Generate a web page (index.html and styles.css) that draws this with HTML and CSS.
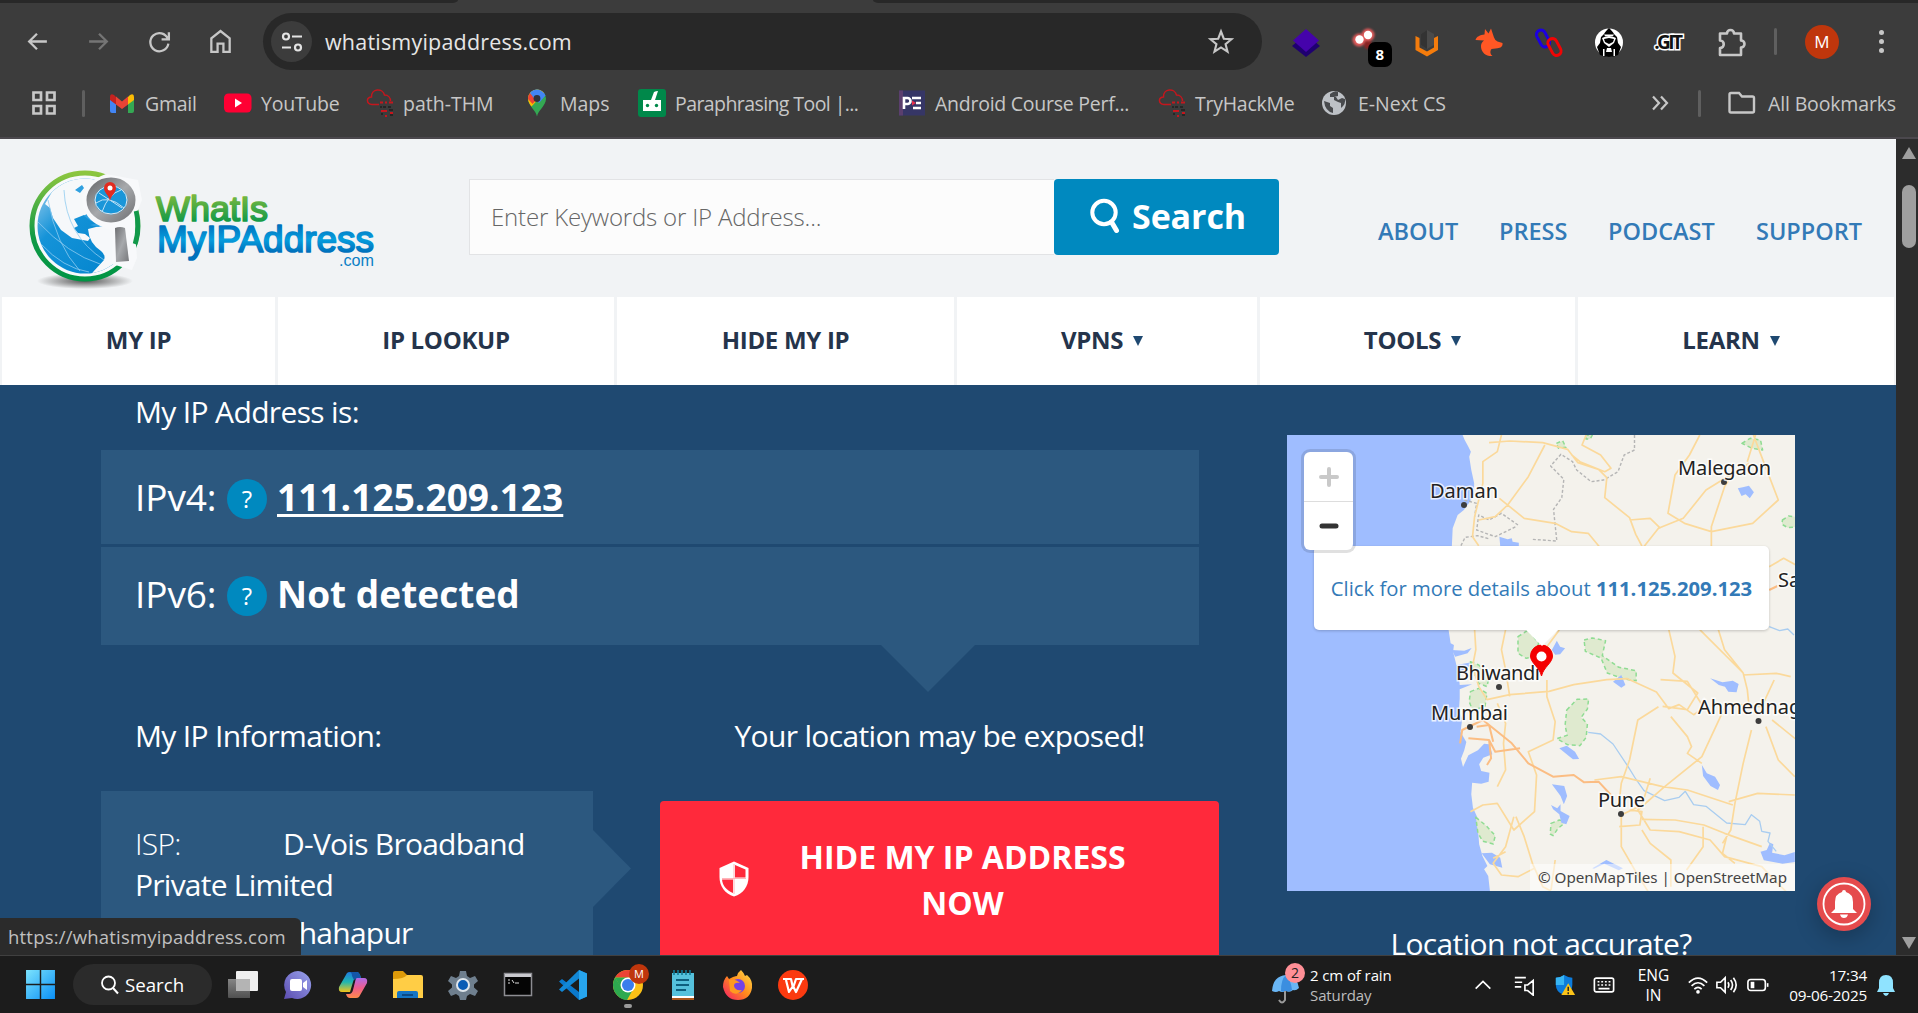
FILE: index.html
```html
<!DOCTYPE html>
<html lang="en">
<head>
<meta charset="utf-8">
<title>What Is My IP Address</title>
<link rel="stylesheet" href="styles.css">
</head>
<body>
<svg class="defs" width="0" height="0" aria-hidden="true">
  <symbol id="thm" viewBox="0 0 28 28">
    <path d="M13 15.500H6C0 15 0 8 5.500 8C5-1 17-1 18.500 6c4 0 6 3 6 6" fill="none" stroke="#c5161d" stroke-width="1.500"/>
    <path d="M14 13.500h3M19 13.500h2M23 13.500h4M15 22h6M24 24h3M19 27h2" stroke="#c5161d" stroke-width="2"/>
    <path d="M14 18h2M17 18h3M22 18h3M23 21h4M15 25h2M24 26h3" stroke="#262626" stroke-width="2"/>
  </symbol>
</svg>

<div class="tabstrip"><i class="tab-left"></i><i class="tab-right"></i></div>
<header class="toolbar">
  <svg class="nav-ic" viewBox="0 0 24 24"><path d="M21 12H4M11.500 4.500L4 12l7.500 7.500" class="ln"/></svg>
  <svg class="nav-ic dim" viewBox="0 0 24 24"><path d="M3 12h17M12.500 4.500L20 12l-7.500 7.500" class="ln"/></svg>
  <svg class="nav-ic" viewBox="0 0 24 24"><path d="M20 9.500A8.700 8.700 0 1 0 20.500 14M21 3v7h-7" class="ln"/></svg>
  <svg class="nav-ic" viewBox="0 0 24 24"><path d="M3.200 22V9L12 2l8.800 7v13h-6v-8H9.200v8z" class="ln"/></svg>
  <div class="omnibox">
    <span class="site"><svg width="22" height="22" viewBox="0 0 22 22"><g fill="none" stroke="#e3e3e3" stroke-width="2.200"><circle cx="5" cy="5.500" r="3"/><path d="M11 5.500h10M1 16.500h9"/><circle cx="17" cy="16.500" r="3"/></g></svg></span>
    <span class="url">whatismyipaddress.com</span>
    <svg class="star" width="28" height="28" viewBox="0 0 24 24"><path d="M12 3l2.400 6.200 6.600.4-5.100 4.200L17.600 20.300 12 16.700l-5.600 3.600 1.700-6.500L3 9.600l6.600-.4z" fill="none" stroke="#c7c7c7" stroke-width="1.800"/></svg>
  </div>
  <div class="exts">
    <svg viewBox="0 0 32 32"><path d="M16 8L30 20 16 31 2 20z" fill="#1f0070"/><path d="M16 3l13 11.500L16 26 3 14.500z" fill="#4503ab"/></svg>
    <span class="ext-badge"><svg viewBox="0 0 32 32"><g class="glow"><circle cx="8" cy="14" r="6.500" fill="#e05a5a"/><circle cx="17" cy="9" r="6.500" fill="#e05a5a"/><circle cx="17" cy="19" r="4" fill="#8a2222"/></g><circle cx="8.500" cy="13.500" r="4.200" fill="#fff"/><circle cx="17" cy="9" r="4.200" fill="#fff"/></svg><b>8</b></span>
    <svg viewBox="0 0 32 32"><path d="M16 4l7 4v11l-7 4-6-4V8z" fill="#4a4a4a"/><path d="M16 4v19l-6-4V8z" fill="#333"/><path d="M4.500 10l4 2v9.500l7.500 4 7-4V12l4-2v14l-11 6.500L4.500 24z" fill="#f47c0c"/></svg>
    <svg viewBox="0 0 32 32"><path d="M12.500 8.500L13 3l3.500 4.500L19 2.500l3 9q1 3 3.500 4l5 1.500c.5 3.500-2 5-5 5.200l-6 .8c-2 2.500-1 5.500 1 7-6 .5-11-3-11.500-9-.3-3 1-5 3-6.500l-8.500-.5c1-3.500 4.500-5 9-5.500z" fill="#ff5724"/></svg>
    <svg viewBox="0 0 32 32"><g fill="none" stroke-width="3"><rect x="5.500" y="3.500" width="9" height="18" rx="4.500" transform="rotate(-28 10 12.500)" stroke="#1c00e0"/><rect x="17" y="12" width="9" height="18" rx="4.500" transform="rotate(-28 21.500 21)" stroke="#f00505"/></g></svg>
    <svg viewBox="0 0 32 32"><ellipse cx="16" cy="16.500" rx="14" ry="14" fill="#fff"/><path d="M16 2c2 2 4 4 5 6l3 3 1 6 3 4-3 8q-9 4-18 0l-3-8 3-4 1-6 3-3c1-2 3-4 5-6z" fill="#000"/><path d="M11 8.500h10l-1 1.500h-8zM9 12q7-4 14 0l-2 5-5 4-5-4zM14 22h4l1 4h-6zM10 23h1.500v7H10zM20.500 23H22v7h-1.500z" fill="#fff"/><path d="M11 13l5-1 5 1-1 3-4 2-4-2z" fill="#000"/></svg>
    <span class="git">.GIT</span>
    <svg viewBox="0 0 32 32"><path d="M5 7.500h7a3.500 3.500 0 0 1 7 0h7v7a3.500 3.500 0 0 1 0 7V29H5v-7c5 0 5-7.500 0-7.500z" fill="none" stroke="#c7c7c7" stroke-width="2.600" stroke-linejoin="round"/></svg>
  </div>
  <i class="vsep"></i>
  <span class="avatar">M</span>
  <span class="dots"><i></i><i></i><i></i></span>
</header>

<nav class="bookmarks">
  <svg class="apps" viewBox="0 0 24 24"><path d="M1.500 1.500h7.500v7.500H1.500zM15 1.500h7.500v7.500H15zM1.500 15h7.500v7.500H1.500zM15 15h7.500v7.500H15z" fill="none" stroke="#c7c7c7" stroke-width="2.700"/></svg>
  <i class="vsep"></i>
  <a class="snug"><svg viewBox="0 0 28 28"><path d="M2 8v14q0 2 2 2h4V12z" fill="#4285f4"/><path d="M26 8v14q0 2-2 2h-4V12z" fill="#34a853"/><path d="M2 8v3l6 4.500V8L6 6Q2 4 2 8z" fill="#c5221f"/><path d="M26 8v3l-6 4.500V8l2-2q4-2 4 2z" fill="#fbbc04"/><path d="M8 7.500l6 5 6-5v8l-6 4.500-6-4.500z" fill="#ea4335"/></svg>Gmail</a>
  <a class="snug"><svg viewBox="0 0 28 28"><rect x="0" y="4.500" width="27.500" height="19" rx="4.500" fill="#ff0033"/><path d="M11 9.500v9l7-4.500z" fill="#fff"/></svg>YouTube</a>
  <a><svg><use href="#thm"/></svg>path-THM</a>
  <a><svg viewBox="0 0 28 28"><path d="M14 27.500C13 21 5 17 5 9.500A9 9 0 0 1 14 .5a9 9 0 0 1 9 9C23 17 15 21 14 27.500z" fill="#34a853"/><path d="M5 9.500C5 13 7 15.500 8.500 17.500L21 4Q18.500.5 14 .5a9 9 0 0 0-9 9z" fill="#fbbc04"/><path d="M5 10A9 9 0 0 1 7 4l7 6-4.500 5z" fill="#ea4335"/><path d="M7 4Q9.500.5 14 .5T21.500 5L14 13z" fill="#4285f4"/><path d="M21 4l-7 8 2 2 6.500-7.500z" fill="#4285f4"/><circle cx="14" cy="9.500" r="3.400" fill="#2f333d"/></svg>Maps</a>
  <a class="tight"><svg viewBox="0 0 28 28"><rect width="28" height="28" rx="3" fill="#00884a"/><path d="M5 11h8l3-8q2-1 4-1l-3 9h6v11H5z" fill="#fff"/><circle cx="9.500" cy="16.500" r="1.700" fill="#00884a"/><circle cx="18.500" cy="16.500" r="1.700" fill="#00884a"/></svg>Paraphrasing Tool |...</a>
  <a class="snug"><svg viewBox="0 0 28 28"><rect x="1" y="1.500" width="26" height="25" fill="#363666"/><rect x="1" y="1.500" width="4" height="25" fill="#5b3f6e"/><g fill="none" stroke="#fff" stroke-width="2.600"><path d="M6 20V9h3.500a3 3 0 0 1 0 6H6M14 9h9M18 14h5M15 19h8"/></g><path d="M14 11.500l4 2.500-4 2.500z" fill="#e62e4d"/></svg>Android Course Perf...</a>
  <a class="snug"><svg><use href="#thm"/></svg>TryHackMe</a>
  <a><svg viewBox="0 0 28 28"><circle cx="13" cy="14" r="12" fill="#bdc1c6"/><path d="M3 12l6 2v3l3 2v5q-8-2-9-12zM9 5q5-4 8-2v4l-4 1v3l4 2 3 1v5q5-4 4-9l-3-1-4 2-2-3h-6z" fill="#484a4d"/></svg>E-Next CS</a>
  <svg class="more" viewBox="0 0 18 18"><path d="M2 2.500L8 9l-6 6.500M10 2.500L16 9l-6 6.500" fill="none" stroke="#c7c7c7" stroke-width="2.200"/></svg>
  <i class="vsep"></i>
  <a class="all"><svg viewBox="0 0 28 28"><path d="M1.500 22V5.500q0-1.500 1.500-1.500h8l3 3.500h10.500q1.500 0 1.500 1.500V22q0 1.500-1.500 1.500H3q-1.500 0-1.500-1.500z" fill="none" stroke="#c7c7c7" stroke-width="2.400"/></svg>All Bookmarks</a>
</nav>

<div class="viewport">
  <main class="page">
    <div class="masthead">
      <svg class="logo" width="360" height="130" viewBox="22 162 360 130">
        <defs>
          <linearGradient id="ring" x1="0" y1="0" x2="0" y2="1"><stop offset="0" stop-color="#8cc63f"/><stop offset=".6" stop-color="#129a47"/><stop offset="1" stop-color="#009444"/></linearGradient>
          <linearGradient id="sea" x1="0" y1="0" x2="1" y2="1"><stop offset="0" stop-color="#a8d4f0"/><stop offset=".35" stop-color="#1593d8"/><stop offset="1" stop-color="#0082cc"/></linearGradient>
          <linearGradient id="steel" x1="0" y1="0" x2="1" y2="1"><stop offset="0" stop-color="#6d6e71"/><stop offset=".5" stop-color="#a7a9ac"/><stop offset="1" stop-color="#77787b"/></linearGradient>
          <linearGradient id="tg" x1="0" y1="0" x2="0" y2="1"><stop offset=".15" stop-color="#7cb93f"/><stop offset=".8" stop-color="#159a47"/></linearGradient>
          <linearGradient id="tb" x1="0" y1="0" x2="0" y2="1"><stop offset=".15" stop-color="#0071bc"/><stop offset=".5" stop-color="#069ddd"/><stop offset=".8" stop-color="#0071bc"/></linearGradient>
          <radialGradient id="sh"><stop offset="0" stop-color="#555"/><stop offset="1" stop-color="#f1f3f5"/></radialGradient>
          <clipPath id="gl"><circle cx="85" cy="226" r="47.500"/></clipPath>
        </defs>
        <ellipse cx="85" cy="281" rx="48" ry="8" fill="url(#sh)"/>
        <circle cx="85" cy="226" r="53" fill="#f8f9fb" stroke="url(#ring)" stroke-width="5"/>
        <circle cx="85" cy="226" r="47.500" fill="url(#sea)"/>
        <g clip-path="url(#gl)">
          <path d="M52 192q16-16 44-15l10 45-14-3-8-4-10 4 4 7-4 2 4 5 7 1 5 4-2 3-16-3-11-8-8-12-3-10-5-4z" fill="#f6f8fa"/>
          <path d="M88 229l12-3 14 3 19 9-4 28-18 14-22-2 4-6 11-12q2-5-3-9-12-8-13-22z" fill="#f6f8fa"/>
          <path d="M75 190l7-5 2 3-4 5zM84 216l5-4 5 6-3 3zM90 225l12-3 5 3-9 2z" fill="#2fa0e0"/>
          <g fill="none" stroke="#8fcbf0" stroke-width=".8"><path d="M38 222q30 32 62 42M41 244q22 24 48 28M48 200q8 45 32 71M64 190q2 45 40 70"/></g>
        </g>
        <path d="M106 174q-28 10-23 32 4 16 22 22l8 3-1 33 20 6 5-12-3-38 8-20-4-20z" fill="#f8f9fb"/>
        <path d="M115 228q5-2 10 0l4 33-13 1z" fill="url(#steel)"/>
        <path d="M136 211q4 16-1 33" fill="none" stroke="#12994a" stroke-width="4.500"/>
        <ellipse cx="111" cy="200" rx="20.500" ry="18.500" fill="#1a96d9" stroke="url(#steel)" stroke-width="8"/>
        <ellipse cx="111" cy="200" rx="16" ry="14" fill="none" stroke="#e3e9ee"/>
        <path d="M96 203q12-9 28 5M102 212q6-18 19-22M99 193l23 15" fill="none" stroke="#bfe2f6"/>
        <path d="M110 201c-1-6-6-8-6-13a6 6 0 0 1 12 0c0 5-5 7-6 13z" fill="#e22b20"/><circle cx="110" cy="188" r="2.500" fill="#fff"/>
        <g font-family="'Liberation Sans', Arial, sans-serif" stroke-linejoin="round">
          <text x="156" y="221" font-size="35.500" textLength="112" lengthAdjust="spacingAndGlyphs" fill="url(#tg)" stroke="url(#tg)" stroke-width="1.700">WhatIs</text>
          <text x="157" y="252" font-size="36" textLength="217" lengthAdjust="spacingAndGlyphs" fill="url(#tb)" stroke="url(#tb)" stroke-width="1.700">MyIPAddress</text>
          <text x="339" y="265.500" font-size="17" textLength="35" lengthAdjust="spacingAndGlyphs" fill="#0b7fc6">.com</text>
        </g>
      </svg>
      <div class="search">
        <div class="field">Enter Keywords or IP Address...</div>
        <div class="go"><svg width="32" height="36" viewBox="0 0 32 36"><circle cx="15" cy="14.500" r="11.700" fill="none" stroke="#fff" stroke-width="4"/><path d="M22.500 24l5 8.500" stroke="#fff" stroke-width="5" stroke-linecap="round"/></svg><span>Search</span></div>
      </div>
      <div class="links"><a>ABOUT</a><a>PRESS</a><a>PODCAST</a><a>SUPPORT</a></div>
    </div>
    <nav class="menu">
      <a>MY IP</a><a>IP LOOKUP</a><a>HIDE MY IP</a><a class="sub">VPNS<i></i></a><a class="sub">TOOLS<i></i></a><a class="sub">LEARN<i></i></a>
    </nav>
    <div class="hero">
      <section class="info">
        <h2>My IP Address is:</h2>
        <div class="ip"><span class="lab">IPv4:</span><span class="q">?</span><b class="u">111.125.209.123</b></div>
        <div class="ip two"><span class="lab">IPv6:</span><span class="q">?</span><b>Not detected</b></div>
        <i class="down"></i>
        <div class="cols">
          <div class="left">
            <h2>My IP Information:</h2>
            <div class="isp-wrap">
              <div class="isp">
                <p><span class="key">ISP:</span>D-Vois Broadband Private Limited</p>
                <p><span class="key">City:</span>Shahapur</p>
              </div>
              <i class="right-arrow"></i>
            </div>
          </div>
          <div class="rightc">
            <h2>Your location may be exposed!</h2>
            <div class="hide">
              <svg width="30" height="36" viewBox="0 0 30 36"><path d="M15 .5L29.500 7v9c0 9-5 16.500-14.500 19.500C5.500 32.500.5 25 .5 16V7z" fill="#fff"/><path d="M16 4l10.500 4.500V16.500H16zM14 18.500V32C8 29.500 3.500 25 3 18.500z" fill="#ff293b"/><path d="M3 17.500h24M15 3v30" stroke="#ffb4ba" stroke-width="1"/></svg>
              <span>HIDE MY IP ADDRESS<br>NOW</span>
            </div>
          </div>
        </div>
      </section>
      <section class="where">
        <div class="map">
          <svg width="508" height="456" viewBox="0 0 508 456">
            <rect width="508" height="456" fill="#9fbdff"/>
            <g transform="scale(.4132 .33333) translate(-41 -45)">
              <path fill="#f4f2ec" d="M466 45l5 15 8 18 7 17-4 15 5 40 7 40-1 35-12 25-12 20-15 15-12 40-2 52-8 252 5 41 8 5-2 20 8 40 30-7 15-3-20 20-20 15 3 35 30-2-30 15v28l-2 35 8 25-4 40 14 30-5 25-8 25 5 25 13-35 23-15 15-20 12 2 8 30-22 10-10 20 5 20 20 5-2 27-18 6-22-3-2 35 4 40 11 30 8 25-6 20 2 35 8 35 12 30-8 10 10 20 5 55 8 33H1280V45z"/>
              <g fill="#dfeacf" stroke="#8fdc93" stroke-width="1.500" stroke-dasharray="4 3">
                <path d="M693 70l15-8 8 20-18 3zM762 45h18l-5 12h-10zM1142 70l20-15 25 5 5 30-25-5zM1240 300l15-12 18 3v30l-20 2-14-10zM600 650l25-20 25 40-10 40-20 5-20-15zM760 660l20-6 32 8-8 45 40 35 42 10v30l-30-5-40-18-15-45-38-20zM485 725l20 10 25 35-5 30-20-10-10-30zM485 815l20-10 20 15-5 40-30 10-8-25z"/>
                <path d="M718 870l25-32 28-1-3 30-15 25 15 20-3 40-15 25-30-3-26-18 25-10-5-30zM498 1192l25 25 22 30-5 25-25-8-12-25zM680 1210l20-10 17 5-20 20-12 22-7-5z"/>
              </g>
              <g fill="#9fbdff">
                <path d="M555 350l20 8 10-3 2 10 15 3v10h-45zM1132 205l12-3 15-5 12 20-10 18-10-12-10 5zM682 690l12-28 8 18 12 5-12 18-12 1zM830 785l20-20 10 30-10 8zM1065 775l30 12 25-5 14 10-5 25-20-2-8-15-15-5zM440 690l30 2 18-8-10 16-30 10z"/>
                <path d="M700 985l18-8 20 18 10 22-15 1-10-10zM682 1093l30 5 7 30-8 25-8-25zM680 1155l15 10 8-12v20l22 15-8 25-12-5-5-25-15-15zM1045 1035l12 25 20 10 12 25-5 15-18-12-18-30zM1187 1295l15-5 8-22 8 5-3 25 30 8 25-10v30l-30 5-45-10zM780 1345l34-25 40 25-10 6-35-20-25 15zM512 1300l25-2 20 15 5 30-30-10z"/>
              </g>
              <g class="river"><path d="M770 937l30 5 30 30 35 65 20 40 20 35 50 30 35-10 15-18 20 40 30 5 50 50 45 5 15-30 20 20 5 30 20 5-5 25 20 30M1208 620l25 12 20-5 15 18"/></g>
              <g class="border"><path d="M882 45v45l-25 15-15 50-35 25-30 5-35-35-10-25-28-22-25 35 32 40-5 55-20 35 8 95-60-5M600 315l-40-35-30 20-25-15-5 45 45 20 50-30M462 377l10-25 30-5 30 10M470 240l30 10-5 40"/></g>
              <g class="road">
                <path d="M530 68l50-5 80 5 60 20 25 40 50 20 20 25-5 60 60 60 15 50 15 35M665 75l-40 95-50 85-30 35-40 10M560 45l-10 50-35 30v65l-20 100-5 60 15 27M555 235l60 60 75 15 40 25 40 5 30 45M765 45l-10 30 45 30 25 40-15 10-60-30-20-20M1040 45l-25 60-35 60-17 115 40 30 65 25 100-25 62-70-45-145-18-60M1160 130l-105 80-55 85-60 30-45 70M1120 160l-20 40-32 120v60M870 300l50-5 25 30M1175 45l-20 80M1208 440l35-25 30 20"/>
                <path d="M495 629l3 60-8 50 15 60 20 40 55-15 95-10 60-20 80-15 50-3 70 40 30 50 25-12 35 30 25-20-15-30-25-50-65-5M670 780v50l20 75-5 55-60 35 20 70-5 110-50 55-40-80-35 5-30 20M965 629l15 80-5 50 60 60-25 50-60-10M1040 629l105 130 10 50 5 60M1085 629l15 60 45 70M1145 765l80-5 35 10M570 629l-10 60 10 60 10 80M670 680l30-50"/>
                <path d="M1220 780l-30 80-85-10-60 160-90 90-65 70 30 60 70 5 75 25 35 50 90 30 30 40 50 60M940 860l-50 40-20 120-20 70-5 55M970 890l40 60 10 30-10 20 35 30M1165 930l-20 100-20 120-10 80-20 40M1200 920l30 100 40 50M1215 900l60 60M1110 1145l70-25 90 5M785 1080l65-10 100 30 60 10 110 45M850 1180v100l35 75 30 60M850 1185l50-30 20-80M845 1220l50-5 5-40-30-5M900 1230l20 40 50 50v80M1048 1220v60l-40 70M595 1190l20 60 20 80 25 70 20 13M590 1190l-20 90-30 50 20 35 40 5 40-25M540 1315l30-20M680 1410l10-90M1105 1250l-10 50 30 30M550 850l20 60-5 60 5 80-20 50M900 1198l80 2 70 15 50 25 90 40"/>
              </g>
              <g class="motor"><path d="M460 970l5-40 50-30 40 40 30 30 40 60 60 40 50-5 25 22 35-2 30 40M480 955l50 5 15 35 60-10M530 960l5 55-10 20M500 920l30-5 10 50M1208 510l20-12"/></g>
            </g>
            <g fill="#3d3d3d"><circle cx="437" cy="47" r="3"/><circle cx="177" cy="70" r="3"/><circle cx="212" cy="252" r="3"/><circle cx="183" cy="292" r="3"/><circle cx="471.500" cy="286" r="3"/><circle cx="334" cy="379" r="3"/></g>
            <g class="places"><text x="391" y="40" textLength="93">Malegaon</text><text x="143" y="63" textLength="68">Daman</text><text x="491" y="152">Sangamner</text><text x="169" y="245" textLength="84">Bhiwandi</text><text x="144" y="285" textLength="77">Mumbai</text><text x="411" y="279">Ahmednagar</text><text x="311" y="372" textLength="47">Pune</text></g>
            <path d="M254.500 241c-2-9-11-13-11-20a11 11 0 0 1 22 0c0 7-9 11-11 20z" fill="#f40000" stroke="#f40000"/><circle cx="254.500" cy="221.500" r="5" fill="#fff"/>
          </svg>
          <div class="popup">Click for more details about <b>111.125.209.123</b><i></i></div>
          <div class="zoom"><span><svg width="20" height="20"><path d="M10 2v16M2 10h16" stroke="#c9c9c9" stroke-width="4" stroke-linecap="round"/></svg></span><span><svg width="20" height="20"><path d="M3 10h14" stroke="#333" stroke-width="5" stroke-linecap="round"/></svg></span></div>
          <div class="attr">© OpenMapTiles | OpenStreetMap</div>
        </div>
        <p class="acc">Location not accurate?</p>
      </section>
    </div>
  </main>
  <div class="scrollbar"><i class="up"></i><i class="thumb"></i><i class="dn"></i></div>
  <div class="bell"><svg width="54" height="54" viewBox="0 0 54 54"><circle cx="27" cy="27" r="27" fill="#e54b4d"/><circle cx="27" cy="27" r="20.500" fill="none" stroke="#fff" stroke-width="1.800"/><path d="M27 13q2 0 2 2 7 2 7 10v7l4 4H14l4-4v-7q0-8 7-10 0-2 2-2zM23 37.500h8q-1 3.500-4 3.500t-4-3.500z" fill="#fff"/></svg></div>
  <div class="status">https://whatismyipaddress.com</div>
</div>

<footer class="taskbar">
  <svg class="win" viewBox="0 0 30 30"><defs><linearGradient id="w" x1="0" y1="0" x2="1" y2="1"><stop offset="0" stop-color="#7ce3fd"/><stop offset="1" stop-color="#0a8ff5"/></linearGradient></defs><path d="M1 1h13.300v13.300H1zM15.700 1H29v13.300H15.700zM1 15.700h13.300V29H1zM15.700 15.700H29V29H15.700z" fill="url(#w)"/></svg>
  <div class="tsearch"><svg width="20" height="20" viewBox="0 0 20 20"><circle cx="8.500" cy="8" r="6.500" fill="none" stroke="#fff" stroke-width="1.800"/><path d="M13 13l5 5.500" stroke="#fff" stroke-width="2"/></svg><span>Search</span></div>
  <div class="apps-row">
    <svg viewBox="0 0 32 32"><defs><linearGradient id="tv" x1="0" y1="0" x2="0" y2="1"><stop offset="0" stop-color="#858585"/><stop offset="1" stop-color="#505050"/></linearGradient></defs><rect x="9" y="2" width="22" height="20" rx="1" fill="#efefef"/><path d="M1 10h22v19H2q-1 0-1-1z" fill="url(#tv)"/><path d="M9 10h14v12H9z" fill="#b4b4b4"/></svg>
    <svg viewBox="0 0 32 32"><defs><linearGradient id="ch" x1="0" y1="1" x2="1" y2="0"><stop offset="0" stop-color="#5b4cb0"/><stop offset="1" stop-color="#9aa4ee"/></linearGradient></defs><path d="M16 2a14 14 0 1 1-6 27l-8 1 2-7A14 14 0 0 1 16 2z" fill="url(#ch)"/><rect x="8" y="10" width="12" height="12" rx="2" fill="#fff"/><path d="M21 14l4-3v10l-4-3z" fill="#fff"/></svg>
    <svg viewBox="0 0 32 32"><defs><linearGradient id="c1" x1="0" y1="0" x2="0" y2="1"><stop offset="0" stop-color="#1f7ae0"/><stop offset=".5" stop-color="#20b7b0"/><stop offset="1" stop-color="#f5c518"/></linearGradient><linearGradient id="c2" x1="0" y1="0" x2="0" y2="1"><stop offset="0" stop-color="#b06be8"/><stop offset=".5" stop-color="#ef5d8c"/><stop offset="1" stop-color="#ff8a4a"/></linearGradient></defs><path d="M10 4q1-1 3-1h7q2 0 3 3l1 3h-4q-3 0-4 4l-3 10H5q-4 0-3-5z" fill="url(#c1)"/><path d="M22 28q-1 1-3 1h-6q-3 0-4-4h3q3 0 4-4l3-12h8q4 0 3 5z" fill="url(#c2)"/><path d="M20 3q2 0 3 3l1 3h-4l-3 2-2-4q0-4-3-4z" fill="#1456a8"/></svg>
    <svg viewBox="0 0 32 32"><path d="M1 4q0-2 2-2h8l4 4h13v10H1z" fill="#dd9a09"/><path d="M1 10q11 0 14-4h14q2 0 2 2v21H1z" fill="#ffcd45"/><path d="M5 29v-5q0-2 2-2h17q2 0 2 2v5z" fill="#1474c4"/><path d="M10 25h11v2H10z" fill="#0b4a86"/></svg>
    <svg viewBox="0 0 32 32"><path d="M13 2h6l1 5 3 2 5-2 3 5-4 3.500v3l4 3.500-3 5-5-2-3 2-1 4h-6l-1-4-3-2-5 2-3-5 4-3.500v-3L1 12l3-5 5 2 3-2z" fill="#6f7f8e"/><circle cx="16" cy="16" r="6" fill="#0a5cb5" stroke="#dfe6ec" stroke-width="2"/></svg>
    <svg viewBox="0 0 32 32"><rect x="2.500" y="4.500" width="27" height="22" fill="#050505" stroke="#8d8d92" stroke-width="1.500"/><path d="M3 5h26v3H3z" fill="#c9c9ce"/><path d="M6 11h2M6 14h2M10 11l2 3M13 14h4" stroke="#ddd"/></svg>
    <svg viewBox="0 0 32 32"><path d="M22 1l8 3.500v23L22 31 2 12.500 5 10l17 13z" fill="#0b79cc"/><path d="M22 1l8 3.500v23L22 31z" fill="#27a5ee"/><path d="M22 1v8.500L5 23l-3-2.500z" fill="#1288d6"/></svg>
    <span class="chrome"><svg viewBox="0 0 32 32"><circle cx="16" cy="16" r="15" fill="#fbc116"/><path d="M3 8.500A15 15 0 0 1 29 8.500H16z" fill="#ea4335"/><path d="M3 8.500A15 15 0 0 0 15 31l6.500-11.500H10z" fill="#2da94f"/><path d="M3 8.500L9.500 20 16 8.500z" fill="#2da94f"/><circle cx="16" cy="16" r="7.500" fill="#fff"/><circle cx="16" cy="16" r="6" fill="#3b7ded"/></svg><b>M</b><i></i></span>
    <svg viewBox="0 0 32 32"><path d="M5 4h22v24H5z" fill="#55c1dc"/><path d="M5 27h22v2H5z" fill="#fff"/><path d="M5 29h22v2H5z" fill="#a8561c"/><path d="M7 1v5M11 1v5M15 1v5M19 1v5M23 1v5" stroke="#117a97" stroke-width="1.600"/><path d="M9 11h13M9 16h13M9 21h10" stroke="#0e5f7e" stroke-width="2"/></svg>
    <svg viewBox="0 0 32 32"><defs><linearGradient id="ff" x1="1" y1="0" x2="0" y2="1"><stop offset="0" stop-color="#ffe14a"/><stop offset=".5" stop-color="#ff8a1c"/><stop offset="1" stop-color="#f5156c"/></linearGradient></defs><path d="M19 1q3 3 4 6l2-1q6 5 5 13-2 12-14 12T1 18Q1 11 5 7l2 3 4-2q3-1 4-1 1-4 4-6z" fill="url(#ff)"/><circle cx="16" cy="17" r="7" fill="#7542e5"/><path d="M7 11q6-2 11 3-6-1-6 3 1 5 8 4-6 7-12 1z" fill="#ff9a20"/></svg>
    <svg viewBox="0 0 32 32"><circle cx="16" cy="16" r="15" fill="#fb3a10"/><path d="M6 10h8l2 9 3-9h8M9 11l3 12 4-6 3 6 6-13" fill="none" stroke="#fff" stroke-width="2.200" stroke-linejoin="round"/></svg>
  </div>
  <div class="weather"><svg width="34" height="44" viewBox="0 0 34 44"><path d="M3 28q1-15 14-16 11 1 13 13-3 3-6 2-3 3-7 1-4 2-7 0-3 2-7 0z" fill="#69b6f5"/><path d="M12 28q0-12 5-16 5 5 6 15-3 2-6 1-3 1-5 0z" fill="#3b8ee0"/><path d="M16 28v9q-3 5-6 0" fill="none" stroke="#9a9a9a" stroke-width="2"/></svg><b>2</b><p>2 cm of rain<br><span>Saturday</span></p></div>
  <div class="tray">
    <svg viewBox="0 0 24 24"><path d="M4 16l8-8 8 8" class="w"/></svg>
    <svg viewBox="0 0 24 24"><path d="M2 4h12M2 9h8M2 14h7M13 12h3l6-5v16l-6-5h-3z" class="w" stroke-width="1.500"/></svg>
    <svg viewBox="0 0 24 24"><path d="M11 1q5 3 9 3v8q0 8-9 11-9-3-9-11V4q5 0 9-3z" fill="#0c7cdc"/><path d="M11 1v11H2V4q5 0 9-3z" fill="#38b6f4"/><path d="M15.500 10L23 23H8z" fill="#fcc419"/><path d="M15.500 14v4.500M15.500 20v2" stroke="#222" stroke-width="1.600"/></svg>
    <svg viewBox="0 0 24 24"><rect x="1.500" y="4.500" width="21" height="15" rx="2" class="w"/><path d="M5 8.500h2m2 0h2m2 0h2m2 0h2M5 12h2m2 0h2m2 0h2m2 0h2M6 16h12" class="w"/></svg>
    <p class="lang">ENG<br>IN</p>
    <svg viewBox="0 0 24 24"><path d="M2 9.500q10-10 20 0M5 13q7-7 14 0M8 16.500q4-4 8 0" class="w"/><circle cx="12" cy="19.500" r="2" fill="#fff"/></svg>
    <svg viewBox="0 0 24 24"><path d="M1 9h4l5-5v16l-5-5H1zM13 9q2 3 0 6M16 6.500q4 5.500 0 11M19 4q6 8 0 16" class="w" stroke-width="1.500"/></svg>
    <svg viewBox="0 0 24 24"><rect x="1" y="6" width="19" height="12" rx="3" class="w"/><path d="M22.500 10v4" class="w"/><rect x="4" y="8.500" width="4" height="7" fill="#fff"/></svg>
  </div>
  <p class="clock">17:34<br>09-06-2025</p>
  <svg class="tbell" viewBox="0 0 20 24"><path d="M10 2q7 0 7 8v5l2 4H1l2-4v-5q0-8 7-8zM7 20h6q-1 3-3 3t-3-3z" fill="#8fe3ff"/></svg>
</footer>
</body>
</html>
```
FILE: styles.css
```css
* { box-sizing: border-box; }
html, body { margin: 0; height: 1013px; overflow: hidden; background: #3c3c3c; }
body { font-family: "Open Sans", "Noto Sans", sans-serif; width: 1918px; display: flex; flex-direction: column; }
p, h2 { margin: 0; font-weight: 400; }
svg { flex: none; display: block; }
.defs { position: absolute; }

/* browser chrome */
.tabstrip { height: 3px; flex: none; display: flex; justify-content: space-between; }
.tab-left { width: 458px; background: #282828; border-bottom-right-radius: 6px 3px; }
.tab-right { width: 1045px; background: #282828; border-bottom-left-radius: 6px 3px; }
.toolbar { height: 77px; flex: none; display: flex; align-items: center; padding-left: 25px; }
.nav-ic { width: 25px; height: 25px; margin-right: 36px; }
.nav-ic:nth-of-type(4) { margin-right: 30px; }
.ln { fill: none; stroke: #c7c7c7; stroke-width: 2.2; }
.dim .ln { stroke: #757575; }
.omnibox { width: 999px; height: 57px; border-radius: 29px; background: #282828; display: flex; align-items: center; padding-left: 8px; }
.site { width: 41px; height: 41px; border-radius: 50%; background: #3c3c3c; display: grid; place-items: center; }
.url { color: #e6e6e6; font-size: 21.5px; letter-spacing: .2px; margin-left: 13px; flex: 1; }
.star { margin-right: 27px; }
.exts { display: flex; gap: 28.7px; margin-left: 28px; align-items: center; }
.exts > svg, .exts > span { width: 32px; height: 32px; }
.exts svg { width: 32px; height: 32px; }
.glow { filter: blur(1.2px); }
.ext-badge { position: relative; }
.ext-badge b { position: absolute; left: 17px; top: 16px; width: 24px; height: 25px; border-radius: 7px; background: #000; color: #fff; font-size: 15px; line-height: 25px; text-align: center; }
.git { font-size: 19px; font-weight: 700; color: #111; line-height: 32px; letter-spacing: -2.5px; -webkit-text-stroke: 3px #fff; paint-order: stroke fill; white-space: nowrap; }
.vsep { width: 3px; height: 27px; border-radius: 2px; background: #5f5f5f; flex: none; }
.toolbar .vsep { margin-left: 27px; }
.avatar { width: 34px; height: 34px; border-radius: 50%; background: #bf360c; color: #fff; font-size: 17px; line-height: 34px; text-align: center; margin-left: 28px; }
.dots { display: flex; flex-direction: column; gap: 4px; margin-left: 40px; }
.dots i { width: 5px; height: 5px; border-radius: 50%; background: #c7c7c7; }
.bookmarks { height: 59px; flex: none; display: grid; align-items: center; padding-bottom: 11px; border-bottom: 2px solid #4b484d;
  grid-template-columns: 32px 50px 26px 116px 142px 157px 115px 260px 260px 163px 330px 47px 30px 190px; }
.bookmarks .apps { grid-column: 2; width: 24px; height: 24px; }
.bookmarks a { display: flex; align-items: center; gap: 9px; color: #c7c7c7; font-size: 19.5px; white-space: nowrap; }
.bookmarks a svg { width: 28px; height: 28px; }
.bookmarks .snug { letter-spacing: -.25px; }
.bookmarks .tight { letter-spacing: -.58px; }
.bookmarks .all { gap: 12px; letter-spacing: -.15px; }
.more { width: 18px; height: 18px; }

/* page */
.viewport { height: 816px; flex: none; display: flex; position: relative; overflow: hidden; }
.page { width: 1896px; height: 816px; overflow: hidden; background: #f1f3f5; }
.masthead { height: 158px; display: flex; }
.logo { margin: 23px 87px 0 22px; }
.search { display: flex; margin-top: 40px; height: 76px; }
.field { width: 585px; border: 1px solid #e2e3e5; border-right: 0; background: #fcfcfc; color: #666; font-size: 24px; font-weight: 300; line-height: 74px; padding-left: 21px; letter-spacing: -.18px; }
.go { width: 225px; background: #0089bf; border-radius: 4px; display: flex; align-items: center; padding: 0 0 2px 35px; color: #fff; font-size: 34px; font-weight: 700; gap: 11px; letter-spacing: -.1px; }
.links { display: grid; grid-template-columns: 121px 109px 148px 110px; margin: 72px 0 0 99px; height: 40px; line-height: 40px; color: #337ab7; font-size: 23.5px; font-weight: 600; }
.menu { height: 88px; display: grid; gap: 3px; padding: 0 2px; grid-template-columns: 273px 336px 337px 300px 315px 1fr; }
.menu a { background: #fff; color: #25344b; font-size: 24px; font-weight: 700; display: flex; align-items: center; justify-content: center; letter-spacing: -.3px; padding-bottom: 4px; }
.menu .sub { padding-right: 10px; }
.menu i { margin: 4px 0 0 10px; border: 5.500px solid transparent; border-top: 10px solid #1f4971; border-bottom: 0; }
.hero { height: 570px; background: #1f4971; color: #fff; display: flex; padding-left: 101px; }
.hero h2 { font-size: 30px; letter-spacing: -.65px; white-space: nowrap; }
.info { width: 1118px; }
.info > h2 { line-height: 53px; padding-left: 34px; margin-bottom: 12px; }
.ip { width: 1098px; height: 94px; background: #2c587f; display: flex; align-items: center; padding: 0 0 2px 34px; font-size: 37px; }
.ip.two { height: 98px; margin-top: 3px; padding-bottom: 6px; }
.ip b { letter-spacing: .05px; }
.lab { width: 92px; letter-spacing: -.1px; }
.q { width: 40px; height: 40px; border-radius: 50%; background: #0089bf; font-size: 24px; line-height: 40px; text-align: center; margin: 5px 10px 0 0; }
.u { text-decoration: underline; text-decoration-thickness: 3px; text-underline-offset: 3px; }
.down { display: block; width: 94px; height: 47px; margin-left: 780px; background: #2c587f; clip-path: polygon(0 0, 100% 0, 50% 100%); }
.cols { display: flex; gap: 29px; }
.cols h2 { line-height: 40px; padding-top: 24px; }
.left { width: 530px; }
.left h2 { padding-left: 34px; margin-bottom: 35px; }
.isp-wrap { display: flex; }
.isp { width: 492px; height: 400px; background: #2c587f; padding: 32px 34px; font-size: 30px; line-height: 41px; letter-spacing: -.75px; }
.isp p { margin-bottom: 7px; }
.key { display: inline-block; width: 148px; font-weight: 300; }
.right-arrow { width: 38px; height: 77px; margin-top: 39px; background: #2c587f; clip-path: polygon(0 0, 100% 50%, 0 100%); }
.rightc { width: 559px; text-align: center; }
.rightc h2 { margin-bottom: 45px; }
.hide { height: 300px; background: #ff293b; border-radius: 4px; display: flex; padding: 33px 43px 0 59px; }
.hide svg { margin-top: 27px; }
.hide span { flex: 1; font-size: 32px; font-weight: 700; line-height: 46px; }
.where { width: 508px; margin: 50px 0 0 68px; }
.acc { font-size: 30px; line-height: 40px; margin-top: 33px; text-align: center; letter-spacing: -.65px; }

/* map */
.map { height: 456px; position: relative; overflow: hidden; font-family: "Noto Sans", sans-serif; }
.map .road, .map .motor, .map .border, .map .river { fill: none; }
.map path { vector-effect: non-scaling-stroke; stroke-linejoin: round; }
.road { stroke: #fbd99b; stroke-width: 1.7; }
.motor { stroke: #fbbd83; stroke-width: 2; }
.border { stroke: #b5b5b5; stroke-width: 1.4; stroke-dasharray: 3 2; }
.river { stroke: #a9cdf0; stroke-width: 1.3; }
.places text { font-size: 20px; fill: #222; stroke: #fff; stroke-width: 3px; paint-order: stroke fill; stroke-opacity: .8; }
.popup { position: absolute; left: 27px; top: 111px; width: 455px; height: 84px; border-radius: 5px; background: #fff; color: #337ab7; font-family: "Open Sans", sans-serif; font-size: 20.25px; line-height: 84px; text-align: center; white-space: nowrap; box-shadow: 0 1px 3px rgba(0,0,0,.2); }
.popup i { position: absolute; left: 212px; top: 84px; width: 32px; height: 16px; background: #fff; clip-path: polygon(0 0, 100% 0, 50% 100%); }
.zoom { position: absolute; left: 17px; top: 17px; width: 49px; height: 98px; border-radius: 6px; background: #fff; box-shadow: 0 0 0 3px rgba(0,0,0,.12); display: grid; grid-template-rows: 49px 49px; }
.zoom span { display: grid; place-items: center; }
.zoom span + span { border-top: 1px solid #ddd; }
.attr { position: absolute; right: 0; bottom: 0; width: 265px; height: 27px; background: rgba(255,255,255,.5); color: #444; font-size: 15.2px; line-height: 27px; text-align: center; white-space: nowrap; }

/* viewport overlays */
.scrollbar { width: 22px; background: #2c2c2c; display: flex; flex-direction: column; align-items: center; padding-left: 4px; }
.up { margin-top: 8px; border: 7px solid transparent; border-bottom: 12px solid #9f9f9f; border-top: 0; }
.thumb { width: 14px; height: 63px; border-radius: 7px; background: #9f9f9f; margin-top: 26px; }
.dn { margin-top: auto; margin-bottom: 6px; border: 7px solid transparent; border-top: 12px solid #9f9f9f; border-bottom: 0; }
.bell { position: absolute; left: 1817px; top: 738px; width: 54px; height: 54px; border-radius: 50%; box-shadow: 0 6px 22px rgba(0,0,0,.25); }
.status { position: absolute; left: 0; bottom: 0; width: 301px; height: 37px; background: #2b2b2b; color: #c0c0c0; font-size: 18.500px; letter-spacing: .2px; line-height: 38px; padding-left: 8px; border-top-right-radius: 6px; white-space: nowrap; }

/* taskbar */
.taskbar { height: 58px; flex: none; background: #1c1c1c; border-top: 1px solid #404040; display: flex; align-items: center; color: #fff; padding-left: 25px; }
.win { width: 31px; height: 31px; }
.tsearch { width: 139px; height: 41px; border-radius: 21px; background: #2b2b2b; margin-left: 17px; display: flex; align-items: center; padding-left: 27px; gap: 5px; font-size: 18.700px; }
.apps-row { display: flex; gap: 23px; margin-left: 15px; }
.apps-row svg { width: 32px; height: 32px; }
.chrome { position: relative; }
.chrome b { position: absolute; left: 17px; top: -5px; width: 20px; height: 20px; border-radius: 50%; background: #bf360c; font-size: 11px; font-weight: 400; line-height: 20px; text-align: center; }
.chrome i { position: absolute; left: 12px; top: 35px; width: 8px; height: 4px; border-radius: 2px; background: #9a9a9a; }
.weather { display: flex; align-items: center; position: relative; margin-left: 460px; width: 192px; font-size: 15px; letter-spacing: -.1px; line-height: 20px; white-space: nowrap; }
.weather p { margin-left: 7px; }
.weather p span { color: #bdbdbd; }
.weather b { position: absolute; left: 16px; top: 0; width: 20px; height: 20px; border-radius: 50%; background: #ff8f96; color: #222; font-size: 14px; font-weight: 400; text-align: center; }
.tray { display: grid; align-items: center; grid-template-columns: 41px 41px 39px 37px 57px 29px 31px 24px; margin-left: 11px; }
.tray svg { width: 22px; height: 22px; }
.w { fill: none; stroke: #fff; stroke-width: 1.8; }
.lang { font-size: 15.500px; line-height: 20px; text-align: center; padding-right: 10px; }
.clock { font-size: 15.300px; line-height: 20px; text-align: right; width: 96px; letter-spacing: -.2px; }
.tbell { width: 20px; height: 24px; margin-left: 9px; }
```
